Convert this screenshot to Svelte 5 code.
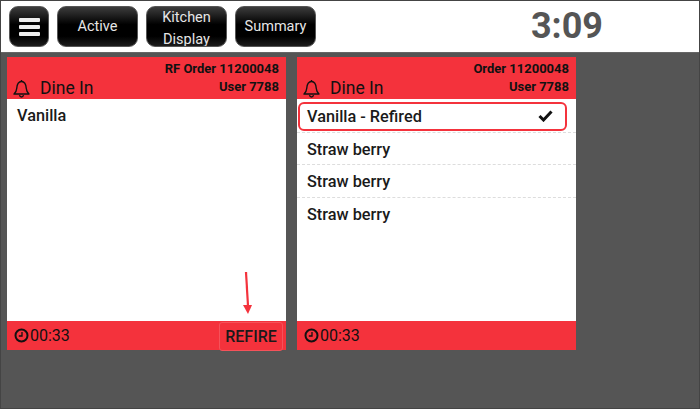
<script>
  const cards = [
    { order: 'RF Order 11200048', items: [{ name: 'Vanilla' }], refire: true },
    { order: 'Order 11200048', items: [{ name: 'Vanilla - Refired', selected: true }, { name: 'Straw berry' }, { name: 'Straw berry' }, { name: 'Straw berry' }], refire: false }
  ];
</script>

<div class="screen">
  <header class="top">
    <button class="btn menu" aria-label="Menu"><span></span><span></span><span></span></button>
    <button class="btn">Active</button>
    <button class="btn two">Kitchen<br />Display</button>
    <button class="btn">Summary</button>
    <div class="time">3:09</div>
  </header>
  <main class="board">
    {#each cards as card}
      <section class="card">
        <div class="head">
          <div class="type">
            <svg width="17" height="19" viewBox="0 0 17 19" fill="none" stroke="#111" stroke-width="1.4" stroke-linejoin="round">
              <path d="M1 15h15c-1.800-1.400-2.500-3-2.700-5.500C13 5.500 11.500 2.500 8.500 2.500S4 5.500 3.700 9.500C3.500 12 2.800 13.600 1 15z" />
              <path d="M6.500 16.200c.3 1.200 1 1.800 2 1.800s1.700-.6 2-1.800" />
              <path d="M8.500 1v1.500" />
            </svg>
            <span>Dine In</span>
          </div>
          <div class="meta"><div>{card.order}</div><div>User 7788</div></div>
        </div>
        <div class="body">
          {#each card.items as item}
            <div class="row" class:selected={item.selected}>
              <span>{item.name}</span>
              {#if item.selected}
                <svg width="15" height="12" viewBox="0 0 15 12"><path d="M1.500 6l4 4 8-8.500" fill="none" stroke="#111" stroke-width="3" /></svg>
              {/if}
            </div>
          {/each}
        </div>
        <div class="foot">
          <div class="timer">
            <svg width="15" height="15" viewBox="0 0 15 15" fill="none" stroke="#111"><circle cx="7.500" cy="7.500" r="6" stroke-width="2" /><path d="M8 4v4H4.800" stroke-width="1.300" /></svg>
            <span>00:33</span>
          </div>
          {#if card.refire}
            <div class="refire">REFIRE</div>
            <svg class="arrow" width="12" height="42" viewBox="0 0 12 42"><path d="M5 0L7 34" stroke="#f4323c" stroke-width="2.200" /><path d="M2 33L11 33 7 42z" fill="#f4323c" /></svg>
          {/if}
        </div>
      </section>
    {/each}
  </main>
</div>

<style>
  :global(body) { margin: 0; background: #fff; }
  .screen {
    width: 700px; height: 409px; box-sizing: border-box;
    border: 1px solid #444;
    display: flex; flex-direction: column;
    font-family: Roboto, sans-serif; background: #555;
  }
  .top {
    height: 52px; background: #fff; flex: none; box-sizing: border-box;
    display: flex; align-items: flex-start; padding: 5px 0 0 8px; gap: 8px;
    border-bottom: 1px solid #666;
  }
  .btn {
    width: 81px; height: 41px; padding: 0; border: 1px solid #555; border-radius: 9px;
    background: linear-gradient(#3c3c3c 0%, #000 45%, #000 75%, #1c1c1c 100%);
    color: #e6e6e6; font: 400 14.5px/1.6 Roboto, sans-serif; text-align: center;
    box-sizing: border-box;
  }
  .btn.two { line-height: 21.5px; overflow: hidden; }
  .menu { width: 40px; display: flex; flex-direction: column; align-items: center; justify-content: center; gap: 3px; }
  .menu span { width: 21px; height: 4px; background: #eee; border-radius: 1px; }
  .time { margin-left: auto; padding-right: 96px; text-align: right; font: 700 36px/40px Roboto, sans-serif; color: #555; }
  .board { flex: 1; padding: 4px 6px; display: flex; gap: 11px; align-items: flex-start; }
  .card { width: 279px; height: 293px; display: flex; flex-direction: column; position: relative; }
  .head {
    height: 42px; background: #f4323c; flex: none; box-sizing: border-box;
    display: flex; justify-content: space-between; padding: 3px 7px 0 6px; position: relative;
  }
  .type { align-self: flex-end; display: flex; align-items: center; gap: 10px; color: #111; font-size: 17.5px; line-height: 24px; margin-bottom: -1px; }
  .meta { text-align: right; font-weight: 700; font-size: 13px; line-height: 17.5px; color: #111; }
  .body { flex: 1; background: #fff; padding-top: 2px; }
  .row {
    height: 32.5px; box-sizing: border-box; padding: 2px 10px 0; display: flex; align-items: center; justify-content: space-between;
    font-size: 16.3px; font-weight: 500; color: #1a1a1a; border-bottom: 1px dashed #ddd;
  }
  .row:first-child { height: 29px; padding-top: 0; }
  .row.selected {
    width: 269px; margin-left: 1px; padding: 0 12.5px 0 7px; height: 28.5px; border: 2px solid #f4323c; border-radius: 6px; margin-bottom: 1.5px; margin-top: 1px;
  }
  .selected + .row { height: 33px; border-top: 1px dashed #ddd; }
  .row:not(.selected):first-child { border-bottom: 0; }
  .row:last-child:not(:first-child) { border-bottom: 0; }
  .foot { height: 29px; background: #f4323c; flex: none; display: flex; align-items: center; justify-content: space-between; padding-left: 7px; padding-right: 3px; }
  .timer { display: flex; align-items: center; gap: 1px; color: #111; font-size: 16px; }
  .refire { width: 64px; height: 29px; box-sizing: border-box; border: 1px solid #f5525a; border-radius: 3px; margin-top: 2px; display: flex; align-items: center; justify-content: center; font-weight: 500; font-size: 16px; color: #1a1a1a; }
  .arrow { position: absolute; right: 33px; bottom: 29px; margin-bottom: 7px; }
</style>
